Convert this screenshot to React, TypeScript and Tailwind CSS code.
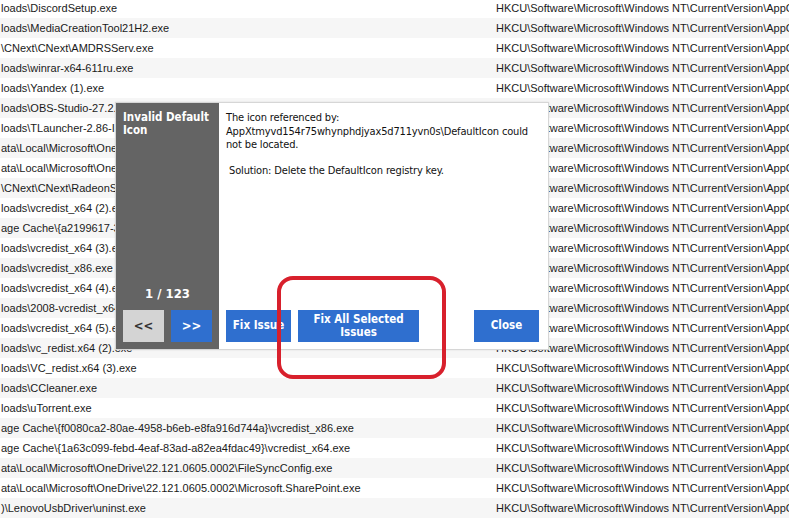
import React from 'react';

// Background list rows (left path column is clipped on the left edge)
const rows: string[] = [
  'loads\\DiscordSetup.exe',
  'loads\\MediaCreationTool21H2.exe',
  '\\CNext\\CNext\\AMDRSServ.exe',
  'loads\\winrar-x64-611ru.exe',
  'loads\\Yandex (1).exe',
  'loads\\OBS-Studio-27.2.4-Full-Installer-x64.exe',
  'loads\\TLauncher-2.86-Installer-1.0.6.exe',
  'ata\\Local\\Microsoft\\OneDrive\\OneDrive.exe',
  'ata\\Local\\Microsoft\\OneDrive\\22.121.0605.0002\\FileCoAuth.exe',
  '\\CNext\\CNext\\RadeonSoftware.exe',
  'loads\\vcredist_x64 (2).exe',
  'age Cache\\{a2199617-35b9-4ffb-8b3a-0b6c3b0d1c1d}\\vcredist_x86.exe',
  'loads\\vcredist_x64 (3).exe',
  'loads\\vcredist_x86.exe',
  'loads\\vcredist_x64 (4).exe',
  'loads\\2008-vcredist_x64.exe',
  'loads\\vcredist_x64 (5).exe',
  'loads\\vc_redist.x64 (2).exe',
  'loads\\VC_redist.x64 (3).exe',
  'loads\\CCleaner.exe',
  'loads\\uTorrent.exe',
  'age Cache\\{f0080ca2-80ae-4958-b6eb-e8fa916d744a}\\vcredist_x86.exe',
  'age Cache\\{1a63c099-febd-4eaf-83ad-a82ea4fdac49}\\vcredist_x64.exe',
  'ata\\Local\\Microsoft\\OneDrive\\22.121.0605.0002\\FileSyncConfig.exe',
  'ata\\Local\\Microsoft\\OneDrive\\22.121.0605.0002\\Microsoft.SharePoint.exe',
  ')\\LenovoUsbDriver\\uninst.exe',
];

const regKey = 'HKCU\\Software\\Microsoft\\Windows NT\\CurrentVersion\\AppCompatFlags\\Compatibility Assistant\\Store';

const tahoma = { fontFamily: '"DejaVu Sans Condensed", "DejaVu Sans", Tahoma, sans-serif' };

export default function App() {
  return (
    <div className="relative w-[789px] h-[521px] overflow-hidden bg-white text-[#1a1a1a] font-['Liberation_Sans',Arial,sans-serif] text-[11px]">
      {/* list */}
      <div className="-mt-[2px] flex flex-col">
        {rows.map((r, i) => (
          <div
            key={i}
            className={`flex h-[20px] items-center whitespace-nowrap ${i % 2 === 1 ? 'bg-[#f6f6f6]' : 'bg-white'}`}
          >
            <span className="w-[496px] shrink-0 overflow-hidden pl-[1px]">{r}</span>
            <span className="overflow-hidden">{regKey}</span>
          </div>
        ))}
      </div>

      {/* issue dialog */}
      <div
        className="absolute left-[115px] top-[102px] flex h-[248px] w-[434px] border border-[#d6d6d6] bg-white shadow-[0_0_2px_rgba(0,0,0,0.1)]"
        style={tahoma}
      >
        <div className="flex w-[103px] shrink-0 flex-col bg-[#646464] px-[7px] pb-[7px] pt-[8px] text-white">
          <div className="text-[11.5px] font-bold leading-[13px]">
            Invalid Default
            <br />
            Icon
          </div>
          <div className="mt-auto mb-[7px] text-center text-[13px] font-bold">1 / 123</div>
          <div className="flex gap-[7px]">
            <button className="h-[32px] w-[41px] bg-[#d4d4d4] text-[13px] font-bold text-[#333]">&lt;&lt;</button>
            <button className="h-[32px] w-[41px] bg-[#2f6fcf] text-[13px] font-bold text-white">&gt;&gt;</button>
          </div>
        </div>
        <div className="flex flex-1 flex-col pl-[7px] pr-[10px] pb-[7px] pt-[8px] text-[11px] leading-[13.5px] tracking-[-0.15px] text-[#111]">
          <p>The icon referenced by:</p>
          <p>AppXtmyvd154r75whynphdjyax5d711yvn0s\DefaultIcon could</p>
          <p>not be located.</p>
          <p className="mt-[12px] pl-[3px]">Solution: Delete the DefaultIcon registry key.</p>
          <div className="mt-auto flex items-end tracking-normal">
            <button className="h-[32px] w-[65px] bg-[#2f6fcf] text-[11.5px] font-bold text-white">Fix Issue</button>
            <button className="ml-[7px] h-[32px] w-[121px] bg-[#2f6fcf] text-[11.5px] font-bold leading-[13px] text-white">
              Fix All Selected
              <br />
              Issues
            </button>
            <button className="ml-[55px] h-[32px] w-[65px] bg-[#2f6fcf] text-[11.5px] font-bold text-white">Close</button>
          </div>
        </div>
      </div>

      {/* red annotation */}
      <div className="pointer-events-none absolute left-[277px] top-[276px] h-[103px] w-[169px] rounded-[16px] border-[4px] border-[#d8202c]" />
    </div>
  );
}
